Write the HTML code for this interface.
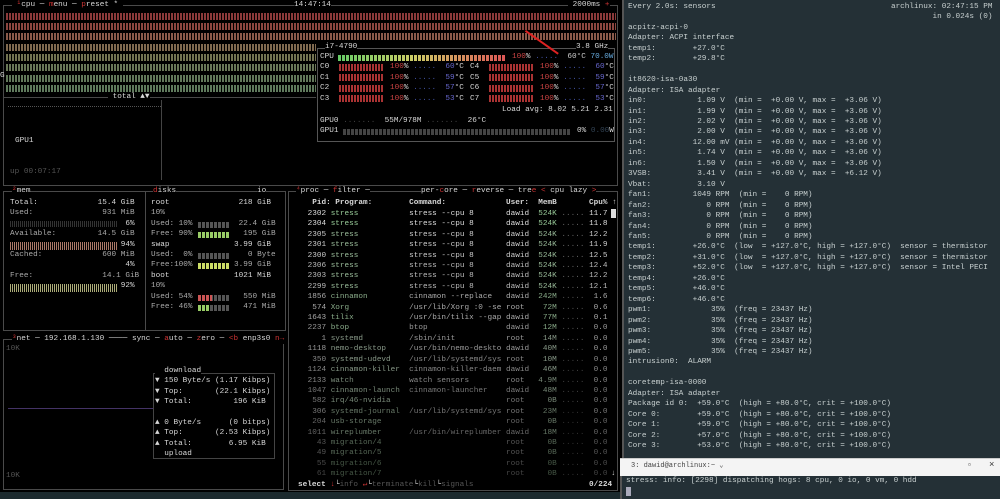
<!DOCTYPE html>
<html><head><meta charset="utf-8"><style>
*{margin:0;padding:0;box-sizing:border-box}
body{width:1000px;height:499px;background:#000;overflow:hidden;position:relative;font-family:"Liberation Mono",monospace}
.t{position:absolute;white-space:pre;font-size:7.7px;line-height:10.4px;color:#d8d8d8}
.b{position:absolute;border:1px solid #4a4a4a}
.r{color:#c33}
.g{position:absolute;height:7px;background:repeating-linear-gradient(90deg,var(--c) 0 2px,transparent 2px 3px),#000}
.bar{position:absolute;height:6px;background:repeating-linear-gradient(90deg,var(--c) 0 3px,transparent 3px 4px)}
#R{position:absolute;left:622px;top:0;width:378px;height:458px;background:#243036;border-left:2px solid #555}
.s{position:absolute;left:4px;white-space:pre;font-size:7.7px;line-height:10.45px;color:#c8d0d0}
</style></head><body>
<!-- CPU box -->
<div class="b" style="left:3px;top:5px;width:615px;height:181px"></div>
<div class="t" style="left:12px;top:0px;background:#000"> <span class="r">¹</span>cpu ─ <span class="r">m</span>enu ─ <span class="r">p</span>reset * </div>
<div class="t" style="left:294px;top:0px;background:#000">14:47:14</div>
<div class="t" style="left:568px;top:0px;background:#000"> 2000ms <span class="r">+</span></div>
<div class="g" style="left:6px;top:13px;width:610px;--c:#8b3a3a"></div>
<div class="g" style="left:6px;top:23px;width:610px;--c:#8c4640"></div>
<div class="g" style="left:6px;top:33px;width:610px;--c:#8a5a4a"></div>
<div class="g" style="left:6px;top:44px;width:310px;--c:#806a50"></div>
<div class="g" style="left:6px;top:54px;width:310px;--c:#737452"></div>
<div class="g" style="left:6px;top:64px;width:310px;--c:#6a7858"></div>
<div class="g" style="left:6px;top:75px;width:310px;--c:#62785a"></div>
<div class="g" style="left:6px;top:85px;width:310px;--c:#5f7a5c"></div>
<div class="t" style="left:0;top:71px">G</div>
<div style="position:absolute;left:4px;top:97px;width:312px;border-top:1px solid #4a4a4a"></div>
<div class="t" style="left:108px;top:92px;background:#000"> total ▲▼</div>
<div style="position:absolute;left:8px;top:106px;width:153px;border-top:1px dotted #555"></div>
<div style="position:absolute;left:161px;top:100px;height:80px;border-left:1px solid #444"></div>
<div class="t" style="left:15px;top:136px">GPU1</div>
<div class="t" style="left:10px;top:167px;color:#555">up 00:07:17</div>
<!-- inner CPU box -->
<div class="b" style="left:317px;top:48px;width:298px;height:94px;border-color:#555;background:#000"></div>
<div class="t" style="left:325px;top:42px;background:#000">i7-4790</div>
<div class="t" style="left:576px;top:42px;background:#000">3.8 GHz</div>
<div class="t" style="left:320px;top:52px">CPU</div>
<div class="bar" style="left:338px;top:55px;width:168px;background:linear-gradient(90deg,#6c6 0%,#cc6 45%,#d55 100%)"></div>
<div class="bar" style="left:338px;top:55px;width:168px;background:repeating-linear-gradient(90deg,transparent 0 3px,#000 3px 4px)"></div>
<div class="t" style="left:512px;top:52px"><span style="color:#c44">100</span>% <span style="color:#45a">.....</span>  <span style="color:#ccc">60°C</span> <span style="color:#6ad">70.0W</span></div>
<div class="t" style="left:320px;top:62px;line-height:10.5px">C0 
C1 
C2 
C3 </div>
<div class="t" style="left:470px;top:62px;line-height:10.5px">C4 
C5 
C6 
C7 </div>
<div class="g" style="left:339px;top:64px;width:45px;--c:#a33"></div>
<div class="g" style="left:339px;top:74px;width:45px;--c:#a33"></div>
<div class="g" style="left:339px;top:85px;width:45px;--c:#a33"></div>
<div class="g" style="left:339px;top:95px;width:45px;--c:#a33"></div>
<div class="g" style="left:489px;top:64px;width:45px;--c:#a33"></div>
<div class="g" style="left:489px;top:74px;width:45px;--c:#a33"></div>
<div class="g" style="left:489px;top:85px;width:45px;--c:#a33"></div>
<div class="g" style="left:489px;top:95px;width:45px;--c:#a33"></div>
<div class="t" style="left:390px;top:62px;line-height:10.5px"><span style="color:#c44">100</span>% <span style="color:#45a">.....</span>  <span style="color:#66c">60</span>°C
<span style="color:#c44">100</span>% <span style="color:#45a">.....</span>  <span style="color:#66c">59</span>°C
<span style="color:#c44">100</span>% <span style="color:#45a">.....</span>  <span style="color:#66c">57</span>°C
<span style="color:#c44">100</span>% <span style="color:#45a">.....</span>  <span style="color:#66c">53</span>°C</div>
<div class="t" style="left:540px;top:62px;line-height:10.5px"><span style="color:#c44">100</span>% <span style="color:#45a">.....</span>  <span style="color:#66c">60</span>°C
<span style="color:#c44">100</span>% <span style="color:#45a">.....</span>  <span style="color:#66c">59</span>°C
<span style="color:#c44">100</span>% <span style="color:#45a">.....</span>  <span style="color:#66c">57</span>°C
<span style="color:#c44">100</span>% <span style="color:#45a">.....</span>  <span style="color:#66c">53</span>°C</div>
<div class="t" style="left:502px;top:105px">Load avg: 8.02 5.21 2.31</div>
<div class="t" style="left:320px;top:116px">GPU0 <span style="color:#444">.......</span>  55M/978M <span style="color:#444">.......</span>  26°C</div>
<div class="t" style="left:320px;top:126px">GPU1</div>
<div class="bar" style="left:343px;top:129px;width:228px;background:repeating-linear-gradient(90deg,#444 0 3px,transparent 3px 4px)"></div>
<div class="t" style="left:577px;top:126px">0% <span style="color:#345">0.00</span>W</div>
<div style="position:absolute;left:526px;top:30px;width:40px;height:1.5px;background:#d22;transform:rotate(35deg);transform-origin:0 0"></div>
<!-- mem -->
<div class="b" style="left:3px;top:191px;width:143px;height:140px"></div>
<div class="t" style="left:12px;top:186px;background:#000"><span class="r">²</span>mem</div>
<div class="t" style="left:10px;top:198px">Total:             15.4 GiB
<span style="color:#aaa">Used:               931 MiB</span>
                         6%
<span style="color:#aaa">Available:         14.5 GiB</span>
                        94%
<span style="color:#aaa">Cached:             600 MiB</span>
                         4%
<span style="color:#aaa">Free:               14.1 GiB</span>
                        92%</div>
<div class="bar" style="left:10px;top:221px;width:107px;background:repeating-linear-gradient(90deg,#333 0 1px,transparent 1px 2px)"></div>
<div class="bar" style="left:10px;top:242px;width:107px;height:8px;background:repeating-linear-gradient(90deg,#a76 0 1px,transparent 1px 2px)"></div>
<div class="bar" style="left:10px;top:284px;width:107px;height:8px;background:repeating-linear-gradient(90deg,#aa7 0 1px,transparent 1px 2px)"></div>
<!-- disks -->
<div class="b" style="left:145px;top:191px;width:141px;height:140px"></div>
<div class="t" style="left:153px;top:186px;background:#000"><span class="r">d</span>isks</div>
<div class="t" style="left:257px;top:186px;background:#000">io</div>
<div class="t" style="left:151px;top:198px">root               218 GiB
<span style="color:#aaa">10%</span>
<span style="color:#aaa">Used: 10%          22.4 GiB</span>
<span style="color:#aaa">Free: 90%           195 GiB</span>
swap              3.99 GiB
<span style="color:#aaa">Used:  0%            0 Byte</span>
<span style="color:#aaa">Free:100%         3.99 GiB</span>
boot              1021 MiB
<span style="color:#aaa">10%</span>
<span style="color:#aaa">Used: 54%           550 MiB</span>
<span style="color:#aaa">Free: 46%           471 MiB</span></div>
<div class="bar" style="left:198px;top:222px;width:32px;background:repeating-linear-gradient(90deg,#555 0 3px,transparent 3px 4px)"></div>
<div class="bar" style="left:198px;top:232px;width:32px;background:repeating-linear-gradient(90deg,#9c6 0 3px,transparent 3px 4px)"></div>
<div class="bar" style="left:198px;top:253px;width:32px;background:repeating-linear-gradient(90deg,#555 0 3px,transparent 3px 4px)"></div>
<div class="bar" style="left:198px;top:263px;width:32px;background:repeating-linear-gradient(90deg,#cd6 0 3px,transparent 3px 4px)"></div>
<div class="bar" style="left:198px;top:295px;width:32px;background:linear-gradient(90deg,#c55 0 14px,#555 14px)"></div>
<div class="bar" style="left:198px;top:295px;width:32px;background:repeating-linear-gradient(90deg,transparent 0 3px,#000 3px 4px)"></div>
<div class="bar" style="left:198px;top:305px;width:32px;background:linear-gradient(90deg,#9c6 0 12px,#555 12px)"></div>
<div class="bar" style="left:198px;top:305px;width:32px;background:repeating-linear-gradient(90deg,transparent 0 3px,#000 3px 4px)"></div>
<!-- net -->
<div class="b" style="left:3px;top:339px;width:281px;height:151px"></div>
<div class="t" style="left:12px;top:334px;background:#000"><span class="r">³</span>net ─ 192.168.1.130 ──── sync ─ <span class="r">a</span>uto ─ <span class="r">z</span>ero ─ <span class="r">&lt;b</span> enp3s0 <span class="r">n→</span></div>
<div class="t" style="left:6px;top:344px;color:#555">10K</div>
<div class="t" style="left:6px;top:471px;color:#555">10K</div>
<div style="position:absolute;left:8px;top:408px;width:145px;border-top:1px solid #436"></div>
<div class="b" style="left:153px;top:373px;width:122px;height:86px;border-color:#444"></div>
<div class="t" style="left:155px;top:366px"><span style="background:#000">  download</span>
▼ 150 Byte/s (1.17 Kibps)
▼ Top:       (22.1 Kibps)
▼ Total:         196 KiB

▲ 0 Byte/s      (0 bitps)
▲ Top:       (2.53 Kibps)
▲ Total:        6.95 KiB
<span style="background:#000">  upload</span></div>
<!-- proc -->
<div class="b" style="left:288px;top:191px;width:330px;height:300px"></div>
<div class="t" style="left:296px;top:186px;background:#000"><span class="r">⁴</span>proc ─ <span class="r">f</span>ilter ─</div>
<div class="t" style="left:421px;top:186px;background:#000">per-<span class="r">c</span>ore ─ <span class="r">r</span>everse ─ tre<span class="r">e</span> <span class="r">&lt;</span> cpu lazy <span class="r">&gt;</span></div>
<div class="t" style="left:303px;top:198px;font-weight:bold">  Pid: Program:        Command:             User:  MemB       Cpu% ↑</div>
<div class="t" style="left:303px;top:209px"><span style="color:#ddd"> 2302 <span style="color:#9c9">stress</span>           stress --cpu 8       dawid  <span style="color:#9c9">524K</span> <span style="color:#666">.....</span> 11.7</span>
<span style="color:#ddd"> 2304 <span style="color:#9c9">stress</span>           stress --cpu 8       dawid  <span style="color:#9c9">524K</span> <span style="color:#666">.....</span> 11.8</span>
<span style="color:#ccc"> 2305 <span style="color:#9b9">stress</span>           stress --cpu 8       dawid  <span style="color:#9b9">524K</span> <span style="color:#666">.....</span> 12.2</span>
<span style="color:#ccc"> 2301 <span style="color:#9b9">stress</span>           stress --cpu 8       dawid  <span style="color:#9b9">524K</span> <span style="color:#666">.....</span> 11.9</span>
<span style="color:#ccc"> 2300 <span style="color:#9b9">stress</span>           stress --cpu 8       dawid  <span style="color:#9b9">524K</span> <span style="color:#666">.....</span> 12.5</span>
<span style="color:#bbb"> 2306 <span style="color:#9b9">stress</span>           stress --cpu 8       dawid  <span style="color:#9b9">524K</span> <span style="color:#666">.....</span> 12.4</span>
<span style="color:#bbb"> 2303 <span style="color:#9b9">stress</span>           stress --cpu 8       dawid  <span style="color:#9b9">524K</span> <span style="color:#666">.....</span> 12.2</span>
<span style="color:#bbb"> 2299 <span style="color:#9b9">stress</span>           stress --cpu 8       dawid  <span style="color:#9b9">524K</span> <span style="color:#666">.....</span> 12.1</span>
<span style="color:#aaa"> 1856 <span style="color:#8a8">cinnamon</span>         cinnamon --replace   dawid  <span style="color:#8a8">242M</span> <span style="color:#555">.....</span>  1.6</span>
<span style="color:#aaa">  574 <span style="color:#8a8">Xorg</span>             /usr/lib/Xorg :0 -se root    <span style="color:#8a8">72M</span> <span style="color:#555">.....</span>  0.6</span>
<span style="color:#aaa"> 1643 <span style="color:#8a8">tilix</span>            /usr/bin/tilix --gap dawid   <span style="color:#8a8">77M</span> <span style="color:#555">.....</span>  0.1</span>
<span style="color:#999"> 2237 <span style="color:#8a8">btop</span>             btop                 dawid   <span style="color:#8a8">12M</span> <span style="color:#555">.....</span>  0.0</span>
<span style="color:#999">    1 <span style="color:#898">systemd</span>          /sbin/init           root    <span style="color:#898">14M</span> <span style="color:#555">.....</span>  0.0</span>
<span style="color:#999"> 1118 <span style="color:#898">nemo-desktop</span>     /usr/bin/nemo-deskto dawid   <span style="color:#898">40M</span> <span style="color:#444">.....</span>  0.0</span>
<span style="color:#888">  350 <span style="color:#898">systemd-udevd</span>    /usr/lib/systemd/sys root    <span style="color:#898">10M</span> <span style="color:#444">.....</span>  0.0</span>
<span style="color:#888"> 1124 <span style="color:#898">cinnamon-killer</span>  cinnamon-killer-daem dawid   <span style="color:#898">46M</span> <span style="color:#444">.....</span>  0.0</span>
<span style="color:#888"> 2133 <span style="color:#787">watch</span>            watch sensors        root   <span style="color:#787">4.9M</span> <span style="color:#444">.....</span>  0.0</span>
<span style="color:#777"> 1047 <span style="color:#787">cinnamon-launch</span>  cinnamon-launcher    dawid   <span style="color:#787">48M</span> <span style="color:#444">.....</span>  0.0</span>
<span style="color:#777">  582 <span style="color:#787">irq/46-nvidia</span>                         root     <span style="color:#787">0B</span> <span style="color:#444">.....</span>  0.0</span>
<span style="color:#777">  306 <span style="color:#676">systemd-journal</span>  /usr/lib/systemd/sys root    <span style="color:#676">23M</span> <span style="color:#333">.....</span>  0.0</span>
<span style="color:#666">  204 <span style="color:#676">usb-storage</span>                           root     <span style="color:#676">0B</span> <span style="color:#333">.....</span>  0.0</span>
<span style="color:#666"> 1011 <span style="color:#676">wireplumber</span>      /usr/bin/wireplumber dawid   <span style="color:#676">18M</span> <span style="color:#333">.....</span>  0.0</span>
<span style="color:#555">   43 <span style="color:#565">migration/4</span>                           root     <span style="color:#565">0B</span> <span style="color:#333">.....</span>  0.0</span>
<span style="color:#555">   49 <span style="color:#565">migration/5</span>                           root     <span style="color:#565">0B</span> <span style="color:#333">.....</span>  0.0</span>
<span style="color:#4a4a4a">   55 <span style="color:#454">migration/6</span>                           root     <span style="color:#454">0B</span> <span style="color:#333">.....</span>  0.0</span>
<span style="color:#444">   61 <span style="color:#454">migration/7</span>                           root     <span style="color:#454">0B</span> <span style="color:#333">.....</span>  0.0</span></div>
<div style="position:absolute;left:611px;top:209px;width:5px;height:9px;background:#ddd"></div>
<div class="t" style="left:611px;top:469px">↓</div>
<div class="t" style="left:298px;top:480px;background:#000"><b>select</b> <span class="r">↓</span>└<span style="color:#555">info</span> <span class="r">↵</span>└<span style="color:#555">terminate</span>└<span style="color:#555">kill</span>└<span style="color:#555">signals</span></div>
<div class="t" style="left:589px;top:480px;background:#000"><b>0/224</b></div>
<div style="position:absolute;left:0;top:492px;width:622px;height:7px;background:#1c2a2e"></div>
<!-- right pane -->
<div id="R">
<div class="s" style="top:2px">Every 2.0s: sensors                                      archlinux: 02:47:15 PM
                                                                  in 0.024s (0)
acpitz-acpi-0
Adapter: ACPI interface
temp1:        +27.0°C
temp2:        +29.8°C

it8620-isa-0a30
Adapter: ISA adapter
in0:           1.09 V  (min =  +0.00 V, max =  +3.06 V)
in1:           1.99 V  (min =  +0.00 V, max =  +3.06 V)
in2:           2.02 V  (min =  +0.00 V, max =  +3.06 V)
in3:           2.00 V  (min =  +0.00 V, max =  +3.06 V)
in4:          12.00 mV (min =  +0.00 V, max =  +3.06 V)
in5:           1.74 V  (min =  +0.00 V, max =  +3.06 V)
in6:           1.50 V  (min =  +0.00 V, max =  +3.06 V)
3VSB:          3.41 V  (min =  +0.00 V, max =  +6.12 V)
Vbat:          3.10 V
fan1:         1049 RPM  (min =    0 RPM)
fan2:            0 RPM  (min =    0 RPM)
fan3:            0 RPM  (min =    0 RPM)
fan4:            0 RPM  (min =    0 RPM)
fan5:            0 RPM  (min =    0 RPM)
temp1:        +26.0°C  (low  = +127.0°C, high = +127.0°C)  sensor = thermistor
temp2:        +31.0°C  (low  = +127.0°C, high = +127.0°C)  sensor = thermistor
temp3:        +52.0°C  (low  = +127.0°C, high = +127.0°C)  sensor = Intel PECI
temp4:        +26.0°C
temp5:        +46.0°C
temp6:        +46.0°C
pwm1:             35%  (freq = 23437 Hz)
pwm2:             35%  (freq = 23437 Hz)
pwm3:             35%  (freq = 23437 Hz)
pwm4:             35%  (freq = 23437 Hz)
pwm5:             35%  (freq = 23437 Hz)
intrusion0:  ALARM

coretemp-isa-0000
Adapter: ISA adapter
Package id 0:  +59.0°C  (high = +80.0°C, crit = +100.0°C)
Core 0:        +59.0°C  (high = +80.0°C, crit = +100.0°C)
Core 1:        +59.0°C  (high = +80.0°C, crit = +100.0°C)
Core 2:        +57.0°C  (high = +80.0°C, crit = +100.0°C)
Core 3:        +53.0°C  (high = +80.0°C, crit = +100.0°C)</div>
</div>
<div style="position:absolute;left:620px;top:458px;width:380px;height:18px;background:#f4f4f4;border-top:1px solid #ccc"></div>
<div class="t" style="left:631px;top:461px;color:#444;font-size:7px">3: dawid@archlinux:~ ⌄</div>
<div class="t" style="left:967px;top:461px;color:#333;font-size:8px">▫</div>
<div class="t" style="left:989px;top:460px;color:#333;font-size:9px">×</div>
<div style="position:absolute;left:620px;top:476px;width:380px;height:23px;background:#243036;border-left:2px solid #555"></div>
<div class="s" style="left:626px;top:476px">stress: info: [2298] dispatching hogs: 8 cpu, 0 io, 0 vm, 0 hdd</div>
<div style="position:absolute;left:626px;top:487px;width:5px;height:9px;background:#aab"></div>
</body></html>
